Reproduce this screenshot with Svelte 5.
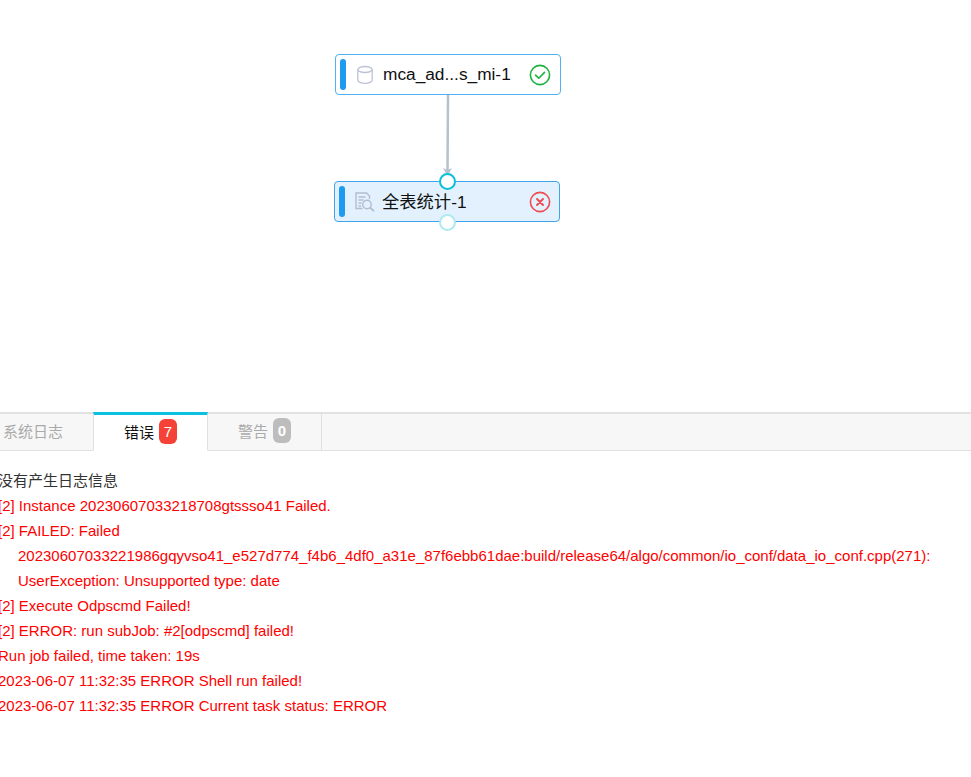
<script>
  const logs = [
    { text: '[2] Instance 20230607033218708gtssso41 Failed.' },
    { text: '[2] FAILED: Failed', more: [
      '20230607033221986gqyvso41_e527d774_f4b6_4df0_a31e_87f6ebb61dae:build/release64/algo/common/io_conf/data_io_conf.cpp(271):',
      'UserException: Unsupported type: date'
    ] },
    { text: '[2] Execute Odpscmd Failed!' },
    { text: '[2] ERROR: run subJob: #2[odpscmd] failed!' },
    { text: 'Run job failed, time taken: 19s' },
    { text: '2023-06-07 11:32:35 ERROR Shell run failed!' },
    { text: '2023-06-07 11:32:35 ERROR Current task status: ERROR' }
  ]
</script>

<div class="page">
  <div class="canvas">
    <svg class="edge" width="971" height="411" viewBox="0 0 971 411">
      <path d="M448 95 L447.5 171" stroke="#b5c2ce" stroke-width="2.5" fill="none" />
      <path d="M443 168 L447.5 176 L452 168 L447.5 170 Z" fill="#b5c2ce" />
    </svg>

    <div class="node first">
      <span class="bar"></span>
      <svg class="icon" width="18" height="20" viewBox="0 0 18 20" fill="none" stroke="#bcc3d6" stroke-width="1.3">
        <ellipse cx="9" cy="4.5" rx="7.2" ry="3" />
        <path d="M1.8 4.5 V15 C1.8 17 5.2 18.4 9 18.4 C12.8 18.4 16.2 17 16.2 15 V4.5" />
      </svg>
      <span class="label">mca_ad...s_mi-1</span>
      <svg class="status" width="22" height="22" viewBox="0 0 22 22" fill="none" stroke="#1fb141" stroke-width="1.6">
        <circle cx="11" cy="11" r="9.6" />
        <path d="M6.5 11.2 L9.8 14.2 L15.5 8.4" stroke-linecap="round" stroke-linejoin="round" />
      </svg>
    </div>

    <div class="node second">
      <span class="bar"></span>
      <svg class="icon" width="20" height="20" viewBox="0 0 20 20" fill="none" stroke="#b4bccf" stroke-width="1.4">
        <path d="M7.5 16.5 H1 V1 H11.5 L14.5 4 V7" />
        <path d="M3.5 5 H10.5 M3.5 8 H8.5 M3.5 11 H6.5 M3.5 14 H6" />
        <circle cx="12" cy="12.5" r="4.2" />
        <path d="M15 15.5 L19 19.2" stroke-width="1.8" />
      </svg>
      <span class="label">全表统计-1</span>
      <svg class="status" width="22" height="22" viewBox="0 0 22 22" fill="none" stroke="#f0494f" stroke-width="1.6">
        <circle cx="11" cy="11" r="9.6" />
        <path d="M8 8 L14 14 M14 8 L8 14" stroke-linecap="round" stroke-width="1.9" />
      </svg>
      <span class="port top"></span>
      <span class="port bottom"></span>
    </div>
  </div>

  <div class="tabs">
    <div class="tab sys">系统日志</div>
    <div class="tab active">错误<span class="badge red">7</span></div>
    <div class="tab">警告<span class="badge gray">0</span></div>
  </div>

  <div class="log">
    <div class="line plain">没有产生日志信息</div>
    {#each logs as log}
      <div class="line">{log.text}</div>
      {#if log.more}
        {#each log.more as m}
          <div class="line indent">{m}</div>
        {/each}
      {/if}
    {/each}
  </div>
</div>

<style>
:global(body) {
  margin: 0;
  background: #fff;
}
.page {
  width: 971px;
  height: 777px;
  overflow: hidden;
  font-family: "Liberation Sans", "Noto Sans CJK SC", sans-serif;
}
.canvas {
  position: relative;
  height: 411px;
}
.edge {
  position: absolute;
  left: 0;
  top: 0;
}
.node {
  position: absolute;
  box-sizing: border-box;
  width: 226px;
  height: 41px;
  display: flex;
  align-items: center;
  background: #fff;
  border: 1px solid #52b1f5;
  border-radius: 4px;
}
.node.first {
  left: 335px;
  top: 54px;
}
.node.second {
  left: 334px;
  top: 181px;
  background: #e2f1fd;
  border-color: #3fa4ec;
}
.bar {
  width: 6px;
  height: 31px;
  margin-left: 4px;
  border-radius: 3px;
  background: #1d9bf0;
}
.icon {
  margin-left: 10px;
  flex: none;
}
.label {
  flex: 1;
  margin-left: 9px;
  font-size: 17.3px;
  color: #111;
  white-space: nowrap;
}
.second .label {
  margin-left: 7px;
  line-height: 20px;
}
.status {
  margin-right: 8px;
  flex: none;
}
.first .status {
  margin-right: 9px;
}
.port {
  position: absolute;
  left: 104px;
  box-sizing: border-box;
  width: 17px;
  height: 17px;
  border-radius: 50%;
  background: #fff;
}
.port.top {
  top: -9px;
  border: 2.5px solid #0cc0dc;
}
.port.bottom {
  top: 32px;
  border: 2.5px solid #aee9f3;
}
.tabs {
  display: flex;
  box-sizing: border-box;
  height: 39px;
  margin-top: 1px;
  background: #f7f7f7;
  border-top: 2px solid #e2e2e2;
  border-bottom: 1px solid #e0e0e0;
}
.tab {
  box-sizing: border-box;
  width: 114px;
  margin-top: -2px;
  margin-bottom: -1px;
  padding-bottom: 2px;
  display: flex;
  align-items: center;
  justify-content: center;
  gap: 5px;
  font-size: 15px;
  color: #aaa;
  border-right: 1px solid #e0e0e0;
}
.tab.sys {
  width: 94px;
  padding-right: 28px;
  border-right: 0;
}
.tab.active {
  color: #111;
  background: #fff;
  border-top: 3px solid #0cc0e0;
  border-left: 1px solid #e0e0e0;
  border-bottom: 1px solid #fff;
  padding-bottom: 3px;
  margin-left: -1px;
  width: 115px;
}
.badge {
  width: 18px;
  height: 25px;
  border-radius: 6px;
  color: #fff;
  font-size: 15px;
  line-height: 25px;
  text-align: center;
}
.badge.red {
  background: #f44336;
}
.badge.gray {
  background: #bdbdbd;
  font-weight: 700;
}
.log {
  margin-top: 17px;
  margin-left: -2px;
}
.line {
  height: 25px;
  line-height: 25px;
  font-size: 15px;
  color: #f00;
  white-space: nowrap;
}
.line.plain {
  color: #333;
}
.line.indent {
  padding-left: 20px;
}
</style>
